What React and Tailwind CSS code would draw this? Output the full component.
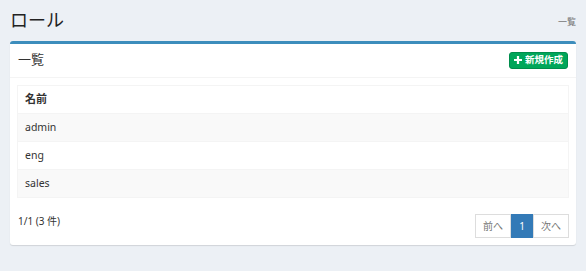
import React from "react";

export default function App() {
  const rows = ["admin", "eng", "sales"];
  return (
    <div
      className="w-[586px] h-[271px] bg-[#ecf0f5] text-[#333]"
      style={{ fontFamily: '"Noto Sans", "Noto Sans CJK JP", sans-serif' }}
    >
      <div className="flex items-end justify-between pl-[10px] pr-[10px] h-[41px] pb-[9px]">
        <h1 className="text-[18px] leading-[24px] font-normal text-[#222]">ロール</h1>
        <div className="text-[9px] leading-[12px] text-[#777] mb-[4px]">一覧</div>
      </div>
      <div className="mx-[10px] bg-white border-t-[3px] border-[#3c8dbc] rounded-[3px] shadow-[0_1px_1px_rgba(0,0,0,0.12)]">
        <div className="flex items-center justify-between h-[34px] pl-[8px] pr-[8px] border-b border-[#f4f4f4]">
          <div className="text-[13px] leading-[18px] -mt-[4px]">一覧</div>
          <button className="flex items-center gap-[3px] h-[17px] px-[4px] bg-[#00a65a] border border-[#008d4c] rounded-[3px] text-white text-[9.5px] font-semibold leading-none -mt-[1px]">
            <svg width="8" height="8" viewBox="0 0 10 10">
              <path d="M3.6 0h2.8v3.6H10v2.8H6.4V10H3.6V6.4H0V3.6h3.6z" fill="white" />
            </svg>
            新規作成
          </button>
        </div>
        <div className="px-[7px] pt-[7px] pb-[7px]">
          <table className="w-full border border-[#f4f4f4] border-collapse text-[10.5px]">
            <thead>
              <tr className="h-[28px]">
                <th className="text-left font-bold text-[11px] px-[7px] border-b border-[#f4f4f4]">名前</th>
              </tr>
            </thead>
            <tbody>
              {rows.map((r, i) => (
                <tr key={r} className={`h-[28px] ${i % 2 === 0 ? "bg-[#f9f9f9]" : "bg-white"}`}>
                  <td className="px-[7px] border-t border-[#f4f4f4]">{r}</td>
                </tr>
              ))}
            </tbody>
          </table>
          <div className="flex items-center justify-between mt-[16px]">
            <div className="text-[10px] pl-[1px] -mt-[10px]">1/1 (3 件)</div>
            <div className="flex h-[24px] text-[10px]">
              <div className="flex items-center justify-center w-[36px] border border-[#ddd] text-[#777]">前へ</div>
              <div className="flex items-center justify-center w-[22px] bg-[#337ab7] border border-[#337ab7] text-white">1</div>
              <div className="flex items-center justify-center w-[36px] border border-[#ddd] text-[#777]">次へ</div>
            </div>
          </div>
        </div>
      </div>
    </div>
  );
}
